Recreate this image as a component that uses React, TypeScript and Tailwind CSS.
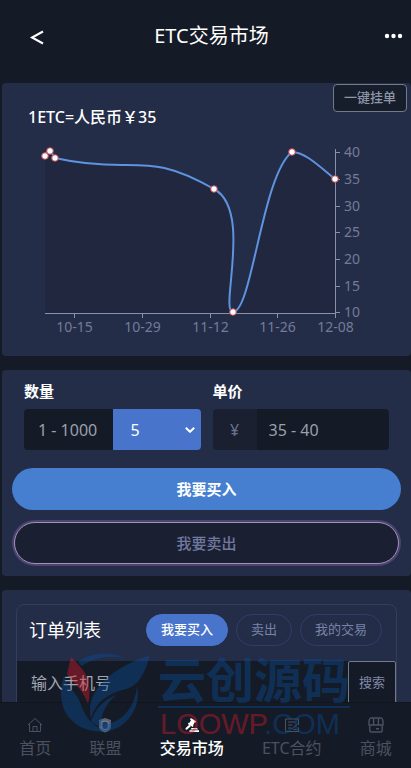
import React, { useState } from 'react'

const chartPoints = [
  [43, 16],
  [48, 11],
  [53, 18],
  [212, 49],
  [231, 172],
  [290, 12],
  [333, 39],
]

const curve =
  'M43 16 C44 13 46 11 48 11 C50 11 51 17 53 18 C75 23 95 25 120 25 C150 25 168 24 212 49 C251 70 217 172 231 172 C250 172 260 35 290 12 C303 12 318 27 333 39'

const xTicks = [
  { x: 72.5, label: '10-15' },
  { x: 140.5, label: '10-29' },
  { x: 208.5, label: '11-12' },
  { x: 275.5, label: '11-26' },
  { x: 333.5, label: '12-08' },
]

const yTicks = [
  { y: 12.5, label: '40' },
  { y: 39.5, label: '35' },
  { y: 66.5, label: '30' },
  { y: 92.5, label: '25' },
  { y: 119.5, label: '20' },
  { y: 146.5, label: '15' },
  { y: 172.5, label: '10' },
]

function PriceChart() {
  return (
    <svg viewBox="0 0 409 200" className="block w-full" role="img" aria-label="ETC">
      <path d={`${curve} V173 H43 Z`} fill="#20273e" />
      <g stroke="#8790ad" strokeWidth="1">
        <path d="M43 173.5 H334 M333.5 9 V174" />
        {xTicks.map((t) => (
          <path key={t.label} d={`M${t.x} 174 v4`} />
        ))}
        {yTicks.map((t) => (
          <path key={t.label} d={`M334 ${t.y} h4`} />
        ))}
      </g>
      <g fill="#737b98" fontSize="14">
        {xTicks.map((t) => (
          <text key={t.label} x={t.x} y="192" textAnchor="middle">
            {t.label}
          </text>
        ))}
        {yTicks.map((t) => (
          <text key={t.label} x="342" y={t.y + 4}>
            {t.label}
          </text>
        ))}
      </g>
      <path d={curve} fill="none" stroke="#5f93e0" strokeWidth="2" />
      {chartPoints.map(([x, y]) => (
        <circle key={x} cx={x} cy={y} r="3.3" fill="#fff" stroke="#c9454c" strokeWidth="1" />
      ))}
    </svg>
  )
}

function HomeIcon() {
  return (
    <svg viewBox="0 0 16 16" className="h-4 w-4" fill="none" stroke="currentColor">
      <path d="M1 8 L8 1.5 L15 8 M2.5 7 V14.5 H13.5 V7 M6 14.5 V9.5 H10 V14.5" />
    </svg>
  )
}

function ShieldIcon() {
  return (
    <svg viewBox="0 0 16 16" className="h-4 w-4">
      <path
        d="M8 1 L14 3 V9.5 C14 12.5 11.5 14.5 8 15.5 C4.5 14.5 2 12.5 2 9.5 V3 Z"
        fill="#5a6375"
      />
      <path
        d="M8 4 L11.2 5 V9.3 C11.2 11 10 12 8 12.7 C6 12 4.8 11 4.8 9.3 V5 Z"
        fill="#1d3b63"
        stroke="#7f899c"
      />
    </svg>
  )
}

function GavelIcon() {
  return (
    <svg viewBox="0 0 16 16" className="h-4 w-4" fill="currentColor">
      <path d="M6.8 1 L12.3 4.2 L11.6 5.6 L10.9 5.3 L9 8.3 L9.6 8.8 L8.8 10 L3.8 7 L4.6 5.7 L5.3 6 L7 3.2 L6 2.4 Z" />
      <path d="M5.2 7.8 L7 9 L3.2 12.6 C2.2 13.4 0.8 12.2 1.7 11.1 Z" />
      <path d="M7.5 11 H13 L14 12.6 H6.6 Z M5.5 13.3 H15 V15 H5.5 Z" />
    </svg>
  )
}

function ContractIcon() {
  return (
    <svg viewBox="0 0 16 16" className="h-4 w-4" fill="none" stroke="currentColor">
      <path d="M1.5 2 H14.5 V8 M14.5 10.5 V14.5 H1.5 V2 M4 5 H11.5 M4 8 H8.5 M4 11 H7.5 M8 12 L13.5 7 M9.5 12.5 H12.5" />
    </svg>
  )
}

function ShopIcon() {
  return (
    <svg viewBox="0 0 16 16" className="h-4 w-4" fill="none" stroke="currentColor" strokeWidth="1.4">
      <path d="M3 1 H13 C14 1 15 3 15 4.5 V8 H1 V4.5 C1 3 2 1 3 1 Z" />
      <path d="M5.6 1 V8 M10.4 1 V8 M1.8 8.5 V13.5 C1.8 14.5 2.3 15 3.3 15 H12.7 C13.7 15 14.2 14.5 14.2 13.5 V8.5 M8 11.8 H11" />
    </svg>
  )
}

const navItems = [
  { label: '首页', icon: HomeIcon },
  { label: '联盟', icon: ShieldIcon },
  { label: '交易市场', icon: GavelIcon, active: true },
  { label: 'ETC合约', icon: ContractIcon },
  { label: '商城', icon: ShopIcon },
]

const orderTabs = ['我要买入', '卖出', '我的交易']

function Watermark() {
  return (
    <div
      aria-hidden="true"
      className="pointer-events-none absolute bottom-8 left-15 flex items-end gap-2 opacity-40"
    >
      <svg viewBox="0 0 90 84" className="h-[84px] w-[90px]">
        <g fill="#0b4f9c">
          <path d="M18 10 C34 -1 52 0 64 6 C48 3 34 5 22 14 Z" />
          <path d="M4 24 C-4 48 4 74 34 79 C40 80 44 79 46 78 C30 74 24 62 20 50 C16 40 6 34 4 24 Z" />
          <path d="M31 66 C26 46 40 20 90 3 C85 22 78 34 66 37 C48 41 36 50 31 66 Z" />
          <path d="M31 69 C36 58 40 50 56 43 C44 54 40 64 42 75 C38 74 33 72 31 69 Z" />
          <path d="M40 80 C64 80 82 58 77 34 C75 56 62 70 44 73 Z" />
        </g>
        <path d="M11 5 C18 12 26 20 28 28 C30 36 30 44 28 52 C24 40 14 30 7 22 Z" fill="#e01a2b" />
      </svg>
      <div className="flex flex-col gap-1">
        <span className="block border-b-2 border-[#0b4f9c] text-[48px] leading-[52px] font-bold text-[#0b4f9c]">
          云创源码
        </span>
        <span className="block pl-0.5 font-['Liberation_Sans',sans-serif] text-[29px] leading-6 text-[#0b4f9c]">
          <span className="text-[#e01a2b]">LOOWP</span>.COM
        </span>
      </div>
    </div>
  )
}

export default function App() {
  const [activeTab, setActiveTab] = useState('我要买入')
  const [quantity, setQuantity] = useState('5')

  return (
    <div className="relative flex h-screen flex-col overflow-hidden bg-[#151b26] font-['Noto_Sans','Noto_Sans_CJK_SC',sans-serif] text-white">
      <header className="flex h-[83px] shrink-0 items-center justify-between pr-2 pb-3 pl-7">
        <button type="button" aria-label="返回" className="w-5">
          <svg viewBox="0 0 20 20" className="h-5 w-5" fill="none" stroke="currentColor" strokeWidth="2">
            <path d="M15 5.5 L4 11.5 L15 17.5" />
          </svg>
        </button>
        <h1 className="text-xl leading-7">ETC交易市场</h1>
        <button type="button" aria-label="更多" className="flex w-7 justify-end">
          <svg viewBox="0 0 20 20" className="h-5 w-5" fill="currentColor">
            <circle cx="4" cy="10" r="2.2" />
            <circle cx="10.5" cy="10" r="2.2" />
            <circle cx="17" cy="10" r="2.2" />
          </svg>
        </button>
      </header>

      <main className="flex min-h-0 flex-1 flex-col gap-3.5 overflow-y-auto pl-0.5 [scrollbar-width:none]">
        <section className="shrink-0 rounded-sm bg-[#232d48] pb-4">
          <div className="flex items-start justify-between pr-1 pl-6.5">
            <p className="pt-5.5 text-base leading-6 font-medium">1ETC=人民币￥35</p>
            <button
              type="button"
              className="mt-px h-7 rounded-sm border border-[#737a8a] bg-[#171e2b] px-2.5 text-[13px] font-medium text-[#8f96a8]"
            >
              一键挂单
            </button>
          </div>
          <div className="pt-[11px]">
            <PriceChart />
          </div>
        </section>

        <section className="shrink-0 rounded-sm bg-[#232d48] px-2.5 pt-[9px] pb-3">
          <div className="flex pr-3 pl-3">
            <div className="w-1/2 pr-1.5">
              <label htmlFor="quantity" className="block text-[15px] leading-6 font-bold">
                数量
              </label>
              <div className="mt-1.5 flex h-[41px] overflow-hidden rounded-sm">
                <input
                  id="quantity"
                  type="text"
                  placeholder="1 - 1000"
                  className="w-0 min-w-0 flex-1 bg-[#151b26] pl-3.5 text-base outline-none placeholder:text-[#9aa0ae]"
                />
                <div className="relative w-22">
                  <select
                    aria-label="数量"
                    value={quantity}
                    onChange={(e) => setQuantity(e.target.value)}
                    className="h-full w-full appearance-none bg-[#4874cb] pl-4.5 text-base outline-none"
                  >
                    <option value="5">5</option>
                    <option value="10">10</option>
                    <option value="50">50</option>
                  </select>
                  <svg
                    viewBox="0 0 10 6"
                    className="pointer-events-none absolute top-4.5 right-1.5 h-1.5 w-2.5"
                    fill="none"
                    stroke="currentColor"
                    strokeWidth="2"
                  >
                    <path d="M0.8 0.8 L5 4.8 L9.2 0.8" />
                  </svg>
                </div>
              </div>
            </div>
            <div className="w-1/2 pl-1.5">
              <label htmlFor="price" className="block text-[15px] leading-6 font-bold">
                单价
              </label>
              <div className="mt-1.5 flex h-[41px] overflow-hidden rounded-sm">
                <span className="flex w-11 items-center justify-center bg-[#1a2030] text-base text-[#6b7590]">
                  ¥
                </span>
                <input
                  id="price"
                  type="text"
                  placeholder="35 - 40"
                  className="w-0 min-w-0 flex-1 bg-[#151b26] pl-3 text-base outline-none placeholder:text-[#9aa0ae]"
                />
              </div>
            </div>
          </div>
          <button
            type="button"
            className="mt-4.5 block h-[42px] w-full rounded-full bg-[#467fd0] text-[15px] font-bold"
          >
            我要买入
          </button>
          <div className="px-0.5 pt-3">
            <button
              type="button"
              className="block h-[42px] w-full rounded-full border border-[#9c93b8] bg-[#1a2032] text-[15px] font-medium text-[#7079a0] ring-2 ring-[#4d4272]"
            >
              我要卖出
            </button>
          </div>
        </section>

        <section className="shrink-0 rounded-sm bg-[#232d48] p-3.5">
          <div className="rounded-lg border border-[#353e59]">
            <div className="flex h-14 items-center justify-between pr-3.5 pb-1.5 pl-3">
              <h2 className="text-lg leading-7">订单列表</h2>
              <div className="flex gap-2">
                {orderTabs.map((tab) => (
                  <button
                    key={tab}
                    type="button"
                    onClick={() => setActiveTab(tab)}
                    className={
                      tab === activeTab
                        ? 'h-8 rounded-full border border-[#4874cb] bg-[#4874cb] px-3.5 text-[13px] font-medium text-white'
                        : 'h-8 rounded-full border border-[#353a6c] px-3.5 text-[13px] text-[#7983a8]'
                    }
                  >
                    {tab}
                  </button>
                ))}
              </div>
            </div>
            <div className="flex h-11 bg-[#151b26]">
              <input
                type="text"
                aria-label="输入手机号"
                placeholder="输入手机号"
                className="w-0 min-w-0 flex-1 pl-3.5 text-base outline-none placeholder:text-[#a1a6b2]"
              />
              <button
                type="button"
                className="w-12 rounded-xs border border-[#737a8a] text-[13px] text-[#8088a8]"
              >
                搜索
              </button>
            </div>
            <div className="h-20" />
          </div>
        </section>
      </main>

      <nav className="flex h-[66px] shrink-0 justify-around border-t border-[#10151e] bg-[#151b26] pt-3.5">
        {navItems.map((item) => {
          const Icon = item.icon
          return (
            <a
              key={item.label}
              href="#"
              className={
                item.active
                  ? 'flex flex-col items-center gap-[3px] text-base leading-6 font-medium text-white'
                  : 'flex flex-col items-center gap-[3px] text-base leading-6 text-[#4b5160]'
              }
            >
              <Icon />
              {item.label}
            </a>
          )
        })}
      </nav>

      <Watermark />
    </div>
  )
}
